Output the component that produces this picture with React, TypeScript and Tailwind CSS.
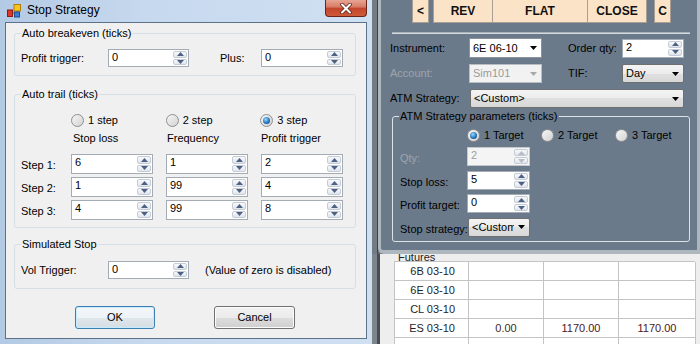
import React from "react";

const Tri = ({ up, c = "#4d6185" }: { up?: boolean; c?: string }) => (
  <svg width="7" height="4" viewBox="0 0 7 4">
    <path d={up ? "M0 4 L3.5 0 L7 4Z" : "M0 0 L3.5 4 L7 0Z"} fill={c} />
  </svg>
);

function Spin({ cls, v, dis = false }: { cls: string; v: string; dis?: boolean }) {
  return (
    <div
      className={`flex border ${
        dis ? "border-[#c4c8cc] bg-[#f4f4f4] text-[#a0a0a0]" : "border-[#a3abb5] bg-white text-black"
      } ${cls}`}
    >
      <div className="flex-1 pl-[3px] pt-[1px] leading-[13px]">{v}</div>
      <div className="flex w-[16px] flex-col gap-[1px] p-[1px]">
        <div className="flex flex-1 items-center justify-center rounded-[2px] border border-[#c6ccd6] bg-[linear-gradient(#f8f9fb,#e0e5ec)]">
          <Tri up c={dis ? "#b8bcc4" : "#4d6185"} />
        </div>
        <div className="flex flex-1 items-center justify-center rounded-[2px] border border-[#c6ccd6] bg-[linear-gradient(#f8f9fb,#e0e5ec)]">
          <Tri c={dis ? "#b8bcc4" : "#4d6185"} />
        </div>
      </div>
    </div>
  );
}

function Radio({ on }: { on?: boolean }) {
  return (
    <div className="flex h-[13px] w-[13px] shrink-0 items-center justify-center rounded-full border border-[#8e8f8f] bg-[linear-gradient(135deg,#f6f6f6,#d2d2d2)]">
      {on && (
        <div className="h-[7px] w-[7px] rounded-full bg-[radial-gradient(circle_at_40%_35%,#9ad8ff,#1e6fb8_60%,#0d3a6e)]" />
      )}
    </div>
  );
}

function Combo({ cls, v, kind }: { cls: string; v: string; kind: "white" | "dis" | "btn" }) {
  const base =
    kind === "white"
      ? "border-[#8a929b] bg-white text-black"
      : kind === "dis"
      ? "border-[#b9bec3] bg-[#f2f2f2] text-[#9a9a9a]"
      : "rounded-[2px] border-[#707070] bg-[linear-gradient(#f4f4f4,#ececec_50%,#e0e0e0_50%,#d8d8d8)] text-black";
  return (
    <div className={`flex items-center border ${base} ${cls}`}>
      <div className="min-w-0 flex-1 overflow-hidden whitespace-nowrap pl-[3px] leading-[13px]">{v}</div>
      <div className="flex w-[15px] shrink-0 items-center justify-center">
        <Tri c={kind === "dis" ? "#a8a8a8" : "#000"} />
      </div>
    </div>
  );
}

function Group({ cls, title, bg, border, children }: { cls: string; title: string; bg: string; border: string; children?: React.ReactNode }) {
  return (
    <div className={`flex flex-col rounded-[3px] border ${border} ${cls}`}>
      <span className={`-mt-[7px] ml-[6px] self-start px-[1px] leading-[13px] ${bg}`}>{title}</span>
      {children}
    </div>
  );
}

function Dialog() {
  return (
    <div className="flex h-[344px] w-[372px] flex-col bg-[linear-gradient(90deg,#b3cae4,#c7d9ee_40%,#cfe0f2)]">
      <div className="flex h-[22px] items-start">
        <svg className="ml-[7px] mt-[4px]" width="14" height="14" viewBox="0 0 14 14">
          <rect x="7" y="0.5" width="6.5" height="6.5" fill="#f5c518" stroke="#b07d10" />
          <rect x="0.5" y="6" width="5" height="6.5" fill="#e0362a" stroke="#8a1a12" />
          <rect x="7.5" y="8" width="5" height="5" fill="#3a7bd5" stroke="#1d4c8f" />
          <path d="M5.5 9 H7.5 M10 7 V8" stroke="#555" />
        </svg>
        <span className="ml-[6px] mt-[3px] text-[12px] leading-[15px] text-black">Stop Strategy</span>
        <div className="flex-1" />
        <div className="mr-[5px] flex h-[17px] w-[42px] items-center justify-center rounded-b-[4px] border border-t-0 border-[#6b2418] bg-[linear-gradient(#e7a595,#d77a63_45%,#c2452b_50%,#cf5a3a)]">
          <svg width="12" height="11" viewBox="0 0 12 11">
            <path d="M2 1.5 L10 9.5 M10 1.5 L2 9.5" stroke="#5a2418" strokeWidth="3.6" strokeLinecap="round" />
            <path d="M2 1.5 L10 9.5 M10 1.5 L2 9.5" stroke="#fff" strokeWidth="2" strokeLinecap="round" />
          </svg>
        </div>
      </div>
      <div className="flex flex-1">
        <div className="w-[5px]" />
        <div className="flex h-[317px] w-[362px] flex-col border border-[#5d7189] bg-[#f0f0f0] text-[11px] text-black">
          {/* Auto breakeven */}
          <Group cls="ml-[8px] mt-[10px] h-[43px] w-[342px]" title="Auto breakeven (ticks)" bg="bg-[#f0f0f0]" border="border-[#d5dfe5]">
            <div className="mt-[9px] flex items-center">
              <span className="w-[93px] pl-[6px]">Profit trigger:</span>
              <Spin cls="h-[18px] w-[81px]" v="0" />
              <span className="ml-[31px] w-[41px]">Plus:</span>
              <Spin cls="h-[18px] w-[82px]" v="0" />
            </div>
          </Group>
          {/* Auto trail */}
          <Group cls="ml-[8px] mt-[18px] h-[134px] w-[342px]" title="Auto trail (ticks)" bg="bg-[#f0f0f0]" border="border-[#d5dfe5]">
            <div className="mt-[12px] flex h-[15px] items-center pl-[56px]">
              {["1 step", "2 step", "3 step"].map((t, i) => (
                <div key={t} className="flex w-[95px] items-center gap-[4px]">
                  <Radio on={i === 2} />
                  <span className="leading-[13px]">{t}</span>
                </div>
              ))}
            </div>
            <div className="mt-[4px] flex pl-[58px] leading-[13px]">
              <span className="w-[95px]">Stop loss</span>
              <span className="w-[95px]">Frequency</span>
              <span className="w-[95px]">Profit trigger</span>
            </div>
            <div className="mt-[9px] flex flex-col gap-[3px]">
              {[
                ["Step 1:", "6", "1", "2"],
                ["Step 2:", "1", "99", "4"],
                ["Step 3:", "4", "99", "8"],
              ].map((r) => (
                <div key={r[0]} className="flex items-center">
                  <span className="mt-[3px] w-[56px] pl-[6px]">{r[0]}</span>
                  <Spin cls="h-[20px] w-[82px]" v={r[1]} />
                  <Spin cls="ml-[13px] h-[20px] w-[82px]" v={r[2]} />
                  <Spin cls="ml-[13px] h-[20px] w-[82px]" v={r[3]} />
                </div>
              ))}
            </div>
          </Group>
          {/* Simulated stop */}
          <Group cls="ml-[8px] mt-[16px] h-[45px] w-[342px]" title="Simulated Stop" bg="bg-[#f0f0f0]" border="border-[#d5dfe5]">
            <div className="mt-[10px] flex items-center">
              <span className="w-[93px] pl-[6px]">Vol Trigger:</span>
              <Spin cls="h-[18px] w-[81px]" v="0" />
              <span className="ml-[16px]">(Value of zero is disabled)</span>
            </div>
          </Group>
          <div className="ml-[69px] mt-[17px] flex">
            <div className="flex h-[23px] w-[80px] items-center justify-center rounded-[3px] border border-[#3c7fb1] bg-[linear-gradient(#f4f8fb,#edf2f6_50%,#dfe6ec_50%,#d6dde3)] shadow-[inset_0_0_0_1px_#c5ebfc]">
              OK
            </div>
            <div className="ml-[59px] flex h-[23px] w-[81px] items-center justify-center rounded-[3px] border border-[#707070] bg-[linear-gradient(#f2f2f2,#ebebeb_50%,#dddddd_50%,#cfcfcf)] shadow-[inset_0_0_0_1px_#fcfcfc]">
              Cancel
            </div>
          </div>
        </div>
        <div className="w-[5px]" />
      </div>
    </div>
  );
}

function Panel() {
  const peach = "flex h-[23px] items-center justify-center border border-t-0 border-[#a89e94] bg-[#fbe3c8] text-[12px] font-bold text-[#111]";
  return (
    <div className="flex h-[254px]">
      <div className="w-[5px] bg-[#737b83]" />
      <div className="w-[1px] bg-[#3d4349]" />
      <div className="flex w-[322px] flex-col rounded-bl-[6px] border-b-[4px] border-l-[3px] border-r-[3px] border-[#aeb6be] bg-[#6b7a8a] text-[11px] text-black">
        <div className="flex">
          <div className={`ml-[31px] w-[17px] ${peach}`}>&lt;</div>
          <div className={`ml-[4px] w-[60px] ${peach}`}>REV</div>
          <div className={`-ml-[1px] w-[96px] ${peach}`}>FLAT</div>
          <div className={`-ml-[1px] w-[60px] ${peach}`}>CLOSE</div>
          <div className={`ml-[7px] w-[17px] ${peach}`}>C</div>
        </div>
        <div className="ml-[11px] mt-[9px] h-[2px] w-[298px] border-t border-b border-t-[#aab2ba] border-b-[#d4d9de]" />
        <div className="mt-[4px] flex items-center">
          <span className="w-[88px] pl-[9px]">Instrument:</span>
          <Combo cls="h-[20px] w-[73px]" v="6E 06-10" kind="white" />
          <span className="ml-[26px] w-[54px]">Order qty:</span>
          <Spin cls="h-[19px] w-[62px]" v="2" />
        </div>
        <div className="mt-[6px] flex items-center">
          <span className="w-[88px] pl-[9px] text-[#9ca5ae]">Account:</span>
          <Combo cls="h-[19px] w-[73px]" v="Sim101" kind="dis" />
          <span className="ml-[26px] w-[54px]">TIF:</span>
          <Combo cls="h-[19px] w-[62px]" v="Day" kind="btn" />
        </div>
        <div className="mt-[6px] flex items-center">
          <span className="w-[89px] pl-[9px]">ATM Strategy:</span>
          <Combo cls="h-[19px] w-[214px]" v="<Custom>" kind="btn" />
        </div>
        <Group cls="ml-[11px] mt-[8px] h-[126px] w-[298px]" title="ATM Strategy parameters (ticks)" bg="bg-[#6b7a8a]" border="border-[#dde2e7]">
          <div className="mt-[5px] flex h-[15px] items-center pl-[74px]">
            {["1 Target", "2 Target", "3 Target"].map((t, i) => (
              <div key={t} className="flex w-[77px] items-center gap-[4px]">
                <Radio on={i === 0} />
                <span className="leading-[13px]">{t}</span>
              </div>
            ))}
          </div>
          <div className="mt-[4px] flex flex-col gap-[4px]">
            <div className="flex items-center">
              <span className="mt-[3px] w-[74px] pl-[7px] text-[#9ca5ae]">Qty:</span>
              <Spin cls="h-[19px] w-[63px]" v="2" dis />
            </div>
            <div className="flex items-center">
              <span className="mt-[3px] w-[74px] pl-[7px]">Stop loss:</span>
              <Spin cls="h-[19px] w-[63px]" v="5" />
            </div>
            <div className="flex items-center">
              <span className="mt-[3px] w-[74px] pl-[7px]">Profit target:</span>
              <Spin cls="h-[19px] w-[63px]" v="0" />
            </div>
            <div className="flex items-center">
              <span className="mt-[3px] w-[75px] pl-[7px] whitespace-nowrap">Stop strategy:</span>
              <Combo cls="h-[19px] w-[62px]" v="<Custom" kind="btn" />
            </div>
          </div>
        </Group>
      </div>
    </div>
  );
}

function Table() {
  const rows = [
    ["6B 03-10", "", "", ""],
    ["6E 03-10", "", "", ""],
    ["CL 03-10", "", "", ""],
    ["ES 03-10", "0.00", "1170.00", "1170.00"],
    ["", "", "", ""],
  ];
  return (
    <div className="flex h-[90px]">
      <div className="w-[5px] bg-[#7d848b]" />
      <div className="w-[3px] bg-[#474d53]" />
      <div className="flex w-[320px] flex-col overflow-hidden bg-[#eeeeee] text-[11px]">
        <div className="h-[3px] bg-[linear-gradient(#4a5056,#eeeeee)]" />
        <div className="-mt-[3px] h-[9px] pl-[18px] leading-[13px] text-[#222]">Futures</div>
        <div className="ml-[14px] mt-[1px] grid w-[301px] grid-cols-[74px_75px_75px_77px] border-l border-t border-[#c4c4c4] bg-white">
          {rows.map((r, i) =>
            r.map((c, j) => (
              <div
                key={`${i}-${j}`}
                className={`flex h-[19px] items-center border-b border-r border-[#c4c4c4] leading-[13px] ${
                  j === 0 ? "justify-end pr-[13px] text-[#1e1e28]" : "justify-center"
                } ${j === 1 ? "text-[#3d2a18]" : ""} ${j > 1 ? "text-[#4a1626]" : ""}`}
              >
                {c}
              </div>
            ))
          )}
        </div>
      </div>
    </div>
  );
}

export default function App() {
  return (
    <div className="flex h-[344px] w-[700px] overflow-hidden bg-[#6b737b] font-['Liberation_Sans',Arial,sans-serif]">
      <Dialog />
      <div className="flex w-[328px] flex-col">
        <Panel />
        <Table />
      </div>
    </div>
  );
}
